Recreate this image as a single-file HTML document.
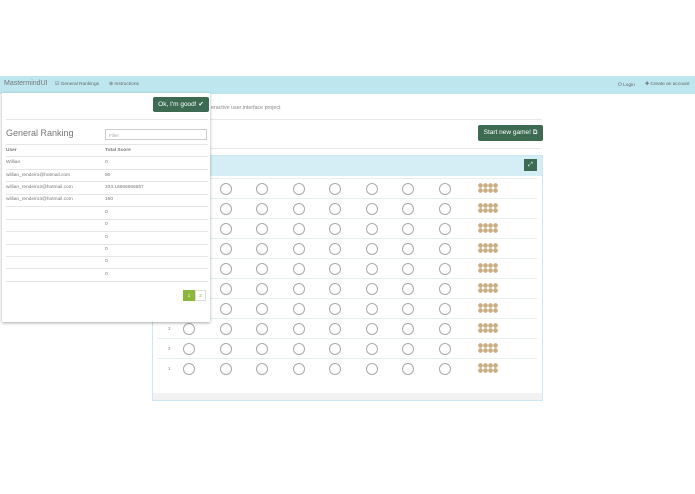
<!DOCTYPE html><html><head><style>
*{margin:0;padding:0;box-sizing:border-box}
body{width:695px;height:494px;background:#fff;font-family:"Liberation Sans",sans-serif;position:relative;overflow:hidden;color:#555}
.a{position:absolute}
.nav{left:0;top:76px;width:695px;height:18px;background:#bde6ef}
.nav span{position:absolute;top:6px;font-size:4.8px;color:#666;white-space:nowrap}
.c{position:absolute;width:12px;height:12px;border:1px solid #aaa;border-radius:50%}
.ln{position:absolute;left:158px;width:379px;height:1px;background:#e6eef0}
.lb{position:absolute;left:168px;font-size:4.5px;color:#888}
.pg{position:absolute;width:20px;height:10px;background:radial-gradient(circle,#c9ad80 2.1px,transparent 2.5px) 0 0/5px 5px}
.dd{left:2px;top:93px;width:208px;height:229px;background:#fff;box-shadow:0 1px 3px rgba(0,0,0,.35)}
.t{position:absolute;font-size:4.8px;color:#777;white-space:nowrap}
.hr{position:absolute;left:4px;width:202px;height:1px;background:#e5e5e5}
</style></head><body>
<div class="a nav"><span style="left:4px;top:4px;font-size:7px;color:#777">MastermindUI</span><span style="left:55px">☑ General Rankings</span><span style="left:109px">⊕ Instructions</span><span style="left:618px">⏻ Login</span><span style="left:645px">✚ Create an account</span></div>
<div class="a" style="left:211px;top:105px;font-size:5.3px;color:#888;white-space:nowrap">eractive user interface project</div>
<div class="a" style="left:152px;top:119px;width:390px;height:1px;background:#e8e8e8"></div>
<div class="a" style="left:152px;top:148px;width:390px;height:1px;background:#e8e8e8"></div>
<div class="a" style="left:478px;top:125px;width:65px;height:16px;background:#3d6b52;border-radius:2px;color:#fff;font-size:6.5px;line-height:16px;text-align:center">Start new game! ⧉</div>
<div class="a" style="left:152px;top:155px;width:391px;height:246px;border:1px solid #cde8f0;background:#fff"></div>
<div class="a" style="left:153px;top:156px;width:389px;height:20px;background:#d5eef6"></div>
<div class="a" style="left:524px;top:159px;width:13px;height:12px;background:#3d6b52;color:#fff;font-size:6px;text-align:center;line-height:12px">⤢</div>
<div class="a" style="left:153px;top:393px;width:389px;height:7px;background:#f2f2f2"></div>
<div class="ln" style="top:178px"></div><div class="ln" style="top:198px"></div><div class="ln" style="top:218px"></div><div class="ln" style="top:238px"></div><div class="ln" style="top:258px"></div><div class="ln" style="top:278px"></div><div class="ln" style="top:298px"></div><div class="ln" style="top:318px"></div><div class="ln" style="top:338px"></div><div class="ln" style="top:358px"></div>
<div class="lb" style="top:326px">3</div><div class="lb" style="top:346px">2</div><div class="lb" style="top:366px">1</div>
<div id="circ"></div>
<script>
var h='';var xs=[189,226,262,299,335,372,408,445];
for(var i=0;i<10;i++){var y=189+20*i;for(var j=0;j<8;j++)h+='<div class="c" style="left:'+(xs[j]-6)+'px;top:'+(y-6)+'px"></div>';h+='<div class="pg" style="left:478px;top:'+(y-6)+'px"></div>';}
document.getElementById('circ').innerHTML=h;
</script>
<div class="a dd">
<div class="a" style="left:151px;top:4px;width:56px;height:15px;background:#3d6b52;border-radius:2px;color:#fff;font-size:6.5px;line-height:15px;text-align:center">Ok, I'm good! ✔</div>
<div class="hr" style="top:26px"></div>
<div class="a" style="left:4px;top:35px;font-size:9px;color:#777">General Ranking</div>
<div class="a" style="left:103px;top:36px;width:102px;height:11px;border:1px solid #ccc;font-size:4.5px;color:#aaa;padding:3px 3px">Filter</div>
<div class="hr" style="top:51px"></div>
<div class="t" style="left:4px;top:55px;font-weight:bold">User</div><div class="t" style="left:103px;top:55px;font-weight:bold">Total Score</div>
<div class="hr" style="top:63px"></div>
<div class="t" style="left:4px;top:67px">Willian</div><div class="t" style="left:103px;top:67px">0</div>
<div class="hr" style="top:76px"></div>
<div class="t" style="left:4px;top:80px">willian_rendeiro@hotmail.com</div><div class="t" style="left:103px;top:80px">90</div>
<div class="hr" style="top:88px"></div>
<div class="t" style="left:4px;top:92px">willian_rendeiro2@hotmail.com</div><div class="t" style="left:103px;top:92px">333.16666666667</div>
<div class="hr" style="top:101px"></div>
<div class="t" style="left:4px;top:104px">willian_rendeiro3@hotmail.com</div><div class="t" style="left:103px;top:104px">160</div>
<div class="hr" style="top:113px"></div><div class="t" style="left:103px;top:117px">0</div>
<div class="hr" style="top:126px"></div><div class="t" style="left:103px;top:129px">0</div>
<div class="hr" style="top:138px"></div><div class="t" style="left:103px;top:142px">0</div>
<div class="hr" style="top:151px"></div><div class="t" style="left:103px;top:154px">0</div>
<div class="hr" style="top:163px"></div><div class="t" style="left:103px;top:166px">0</div>
<div class="hr" style="top:175px"></div><div class="t" style="left:103px;top:179px">0</div>
<div class="hr" style="top:188px"></div>
<div class="a" style="left:181px;top:197px;width:12px;height:11px;background:#8cb83a;color:#fff;font-size:4.5px;text-align:center;line-height:11px">1</div>
<div class="a" style="left:193px;top:197px;width:11px;height:11px;border:1px solid #ddd;color:#8cb83a;font-size:4.5px;text-align:center;line-height:9px">2</div>
</div>
</body></html>
